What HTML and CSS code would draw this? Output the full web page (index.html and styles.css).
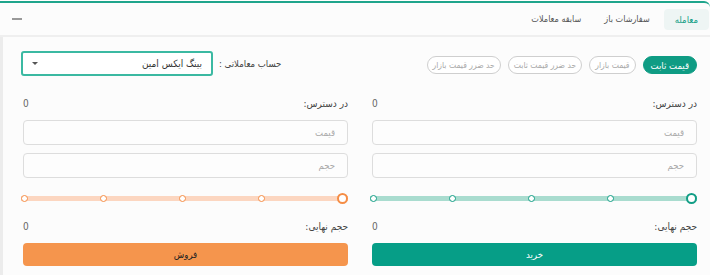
FILE: index.html
```html
<!DOCTYPE html>
<html lang="fa">
<head>
    <meta charset="UTF-8">
    <meta name="viewport" content="width=device-width, initial-scale=1.0">
    <title>معامله</title>
    <link rel="stylesheet" href="styles.css">
</head>
<body>
    <div class="panel" dir="rtl">
        <!-- Tabs -->
        <div class="panel-header">
            <div class="tabs">
                <a href="#" class="tab active">معامله</a>
                <a href="#" class="tab">سفارشات باز</a>
                <a href="#" class="tab">سابقه معاملات</a>
            </div>
            <span class="collapse"></span>
        </div>

        <div class="panel-body">
            <!-- Order type + account -->
            <div class="top-row">
                <div class="order-types">
                    <button class="pill active">قیمت ثابت</button>
                    <button class="pill">قیمت بازار</button>
                    <button class="pill">حد ضرر قیمت ثابت</button>
                    <button class="pill">حد ضرر قیمت بازار</button>
                </div>
                <div class="account">
                    <label for="account-select">حساب معاملاتی :</label>
                    <div class="select" id="account-select">
                        <span>بینگ ایکس امین</span>
                        <span class="caret"></span>
                    </div>
                </div>
            </div>

            <div class="columns">
                <!-- Buy -->
                <div class="side buy">
                    <div class="info-row">
                        <span>در دسترس:</span>
                        <span class="value">0</span>
                    </div>
                    <input type="text" class="field" placeholder="قیمت">
                    <input type="text" class="field" placeholder="حجم">
                    <div class="slider">
                        <span class="handle"></span>
                        <span class="dot"></span>
                        <span class="dot"></span>
                        <span class="dot"></span>
                        <span class="dot"></span>
                    </div>
                    <div class="info-row total">
                        <span>حجم نهایی:</span>
                        <span class="value">0</span>
                    </div>
                    <button class="submit">خرید</button>
                </div>

                <!-- Sell -->
                <div class="side sell">
                    <div class="info-row">
                        <span>در دسترس:</span>
                        <span class="value">0</span>
                    </div>
                    <input type="text" class="field" placeholder="قیمت">
                    <input type="text" class="field" placeholder="حجم">
                    <div class="slider">
                        <span class="handle"></span>
                        <span class="dot"></span>
                        <span class="dot"></span>
                        <span class="dot"></span>
                        <span class="dot"></span>
                    </div>
                    <div class="info-row total">
                        <span>حجم نهایی:</span>
                        <span class="value">0</span>
                    </div>
                    <button class="submit">فروش</button>
                </div>
            </div>
        </div>
    </div>
</body>
</html>
```

FILE: styles.css
```css
* {
    box-sizing: border-box;
}
body {
    margin: 0;
    padding-top: 1px;
    background: #fff;
    font-family: "DejaVu Sans Condensed", "DejaVu Sans", sans-serif;
    font-size: 10px;
    color: #444;
}
.panel {
    width: 710px;
    border-top: 2px solid #1fa58c;
    border-top-right-radius: 6px;
    background: #fcfcfc;
}
.panel-header {
    height: 34px;
    display: flex;
    align-items: center;
    justify-content: space-between;
    border-bottom: 2px solid #efefef;
}
.tabs {
    display: flex;
    align-items: center;
    gap: 5px;
    margin-right: 1px;
}
.tab {
    display: block;
    padding: 0 9px;
    height: 21px;
    line-height: 21px;
    border-radius: 4px;
    font-size: 9px;
    color: #555;
    text-decoration: none;
}
.tab.active {
    background: #eef5f4;
    color: #139e86;
    padding: 0 11px;
    font-size: 9.5px;
}
.collapse {
    width: 10px;
    height: 2px;
    background: #999;
    margin-left: 12px;
}
.panel-body {
    border-left: 3px solid #ececec;
    padding: 14px 13px 10px 20px;
}
.top-row {
    display: flex;
    align-items: center;
    justify-content: space-between;
    height: 25px;
}
.order-types {
    display: flex;
    gap: 7px;
    padding-top: 3px;
}
.pill {
    font: inherit;
    font-size: 8.5px;
    height: 18px;
    padding: 0 5px;
    border-radius: 9px;
    border: 1px solid #cfcfcf;
    background: #fff;
    color: #aaa;
}
.pill.active {
    background: #0f9c84;
    border-color: #0f9c84;
    color: #fff;
    font-size: 9.5px;
    padding: 0 7px;
}
.account {
    display: flex;
    align-items: center;
    gap: 6px;
    margin-left: -2px;
}
.account label {
    color: #444;
    font-size: 9.5px;
}
.select {
    width: 192px;
    height: 25px;
    border: 2px solid #3bb9a2;
    border-radius: 3px;
    background: #fff;
    display: flex;
    align-items: center;
    justify-content: space-between;
    padding: 0 9px;
    color: #333;
}
.caret {
    width: 0;
    height: 0;
    border-left: 3px solid transparent;
    border-right: 3px solid transparent;
    border-top: 3px solid #555;
}
.columns {
    display: grid;
    grid-template-columns: 1fr 1fr;
    gap: 24px;
    margin-top: 21px;
}
.side {
    display: flex;
    flex-direction: column;
    min-width: 0;
}
.info-row {
    display: flex;
    justify-content: space-between;
    height: 14px;
    line-height: 14px;
    color: #444;
}
.info-row .value {
    color: #666;
}
.field {
    font: inherit;
    font-size: 9.5px;
    width: 100%;
    height: 25px;
    margin-top: 9px;
    border: 1px solid #ddd;
    border-radius: 4px;
    background: #fdfdfd;
    padding: 0 12px;
    direction: rtl;
}
.field + .field {
    margin-top: 8px;
}
.field::placeholder {
    color: #aaa;
}
.slider {
    margin-top: 15px;
    height: 11px;
    display: flex;
    align-items: center;
    justify-content: space-between;
    margin-left: -2px;
}
.buy .slider {
    background: linear-gradient(#a9dccf, #a9dccf) center / 100% 5px no-repeat;
}
.sell .slider {
    background: linear-gradient(#fcd6c0, #fcd6c0) center / 100% 5px no-repeat;
}
.dot {
    width: 7px;
    height: 7px;
    border-radius: 50%;
    background: #fff;
    border: 1.5px solid;
}
.handle {
    width: 11px;
    height: 11px;
    border-radius: 50%;
    background: #fff;
    border: 2px solid;
}
.buy .dot, .buy .handle {
    border-color: #129e86;
}
.sell .dot, .sell .handle {
    border-color: #f58d45;
}
.total {
    margin-top: 16px;
}
.submit {
    font: inherit;
    font-size: 9.5px;
    height: 23px;
    margin-top: 9px;
    border: none;
    border-radius: 4px;
}
.buy .submit {
    background: #069e87;
    color: #fff;
}
.sell .submit {
    background: #f5954d;
    color: #222;
}
```
